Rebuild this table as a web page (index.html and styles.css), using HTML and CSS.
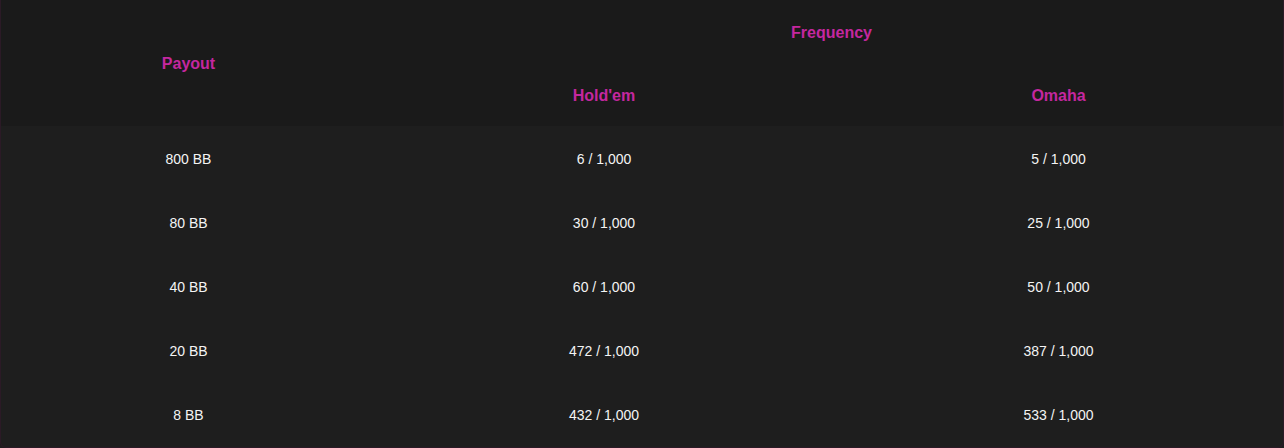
FILE: index.html
```html
<!DOCTYPE html>
<html>
<head>
<meta charset="utf-8">
<link rel="stylesheet" href="styles.css">
</head>
<body>
<div class="wrap">
<table class="payout-table">
  <colgroup>
    <col class="c1">
    <col class="c2">
    <col class="c3">
  </colgroup>
  <thead>
    <tr class="hrow">
      <th rowspan="2">Payout</th>
      <th colspan="2">Frequency</th>
    </tr>
    <tr class="hrow">
      <th>Hold'em</th>
      <th>Omaha</th>
    </tr>
  </thead>
  <tbody>
    <tr><td>800 BB</td><td>6 / 1,000</td><td>5 / 1,000</td></tr>
    <tr><td>80 BB</td><td>30 / 1,000</td><td>25 / 1,000</td></tr>
    <tr><td>40 BB</td><td>60 / 1,000</td><td>50 / 1,000</td></tr>
    <tr><td>20 BB</td><td>472 / 1,000</td><td>387 / 1,000</td></tr>
    <tr><td>8 BB</td><td>432 / 1,000</td><td>533 / 1,000</td></tr>
  </tbody>
</table>
</div>
</body>
</html>
```
FILE: styles.css
```css
html, body {
  margin: 0;
  padding: 0;
  background: #1e1e1e;
}
.wrap {
  width: 1284px;
  height: 448px;
  box-sizing: border-box;
  border: 1px solid #2b1a26;
  border-top: none;
  border-radius: 0 0 6px 6px;
  overflow: hidden;
  background: #1e1e1e;
}
.payout-table {
  width: 1286px;
  margin-left: -1px;
  border-collapse: collapse;
  table-layout: fixed;
  font-family: "Liberation Sans", Arial, sans-serif;
}
.c1 { width: 377px; }
.c2 { width: 454px; }
.c3 { width: 455px; }
thead {
  background: #1a1a1a;
}
.hrow {
  height: 63px;
}
th {
  color: #c4279f;
  font-size: 16px;
  font-weight: bold;
  text-align: center;
  vertical-align: middle;
  padding: 2px 0 0;
}
tbody tr {
  height: 64px;
}
td {
  color: #f4f4f4;
  font-size: 14px;
  text-align: center;
  vertical-align: middle;
  padding: 2px 0 0;
}
```
